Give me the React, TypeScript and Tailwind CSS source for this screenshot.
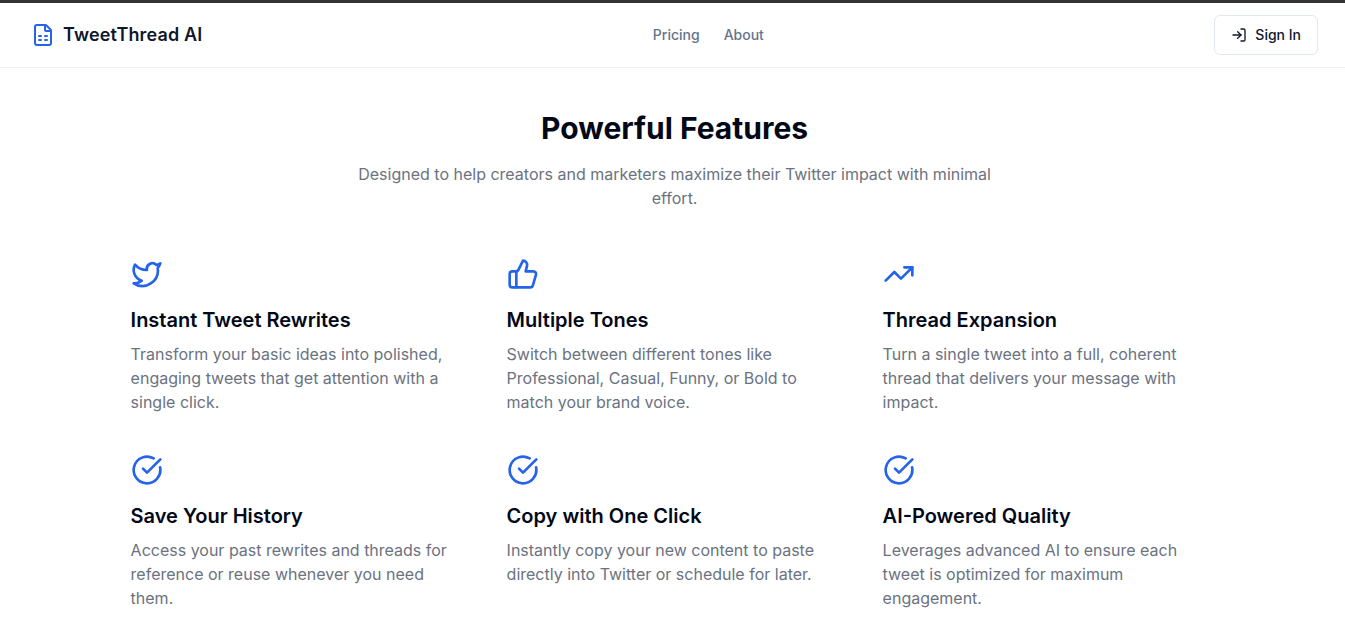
import { FileSpreadsheet, LogIn, Twitter, ThumbsUp, TrendingUp, CircleCheckBig } from "lucide-react";

const features = [
  { icon: Twitter, title: "Instant Tweet Rewrites", text: "Transform your basic ideas into polished, engaging tweets that get attention with a single click." },
  { icon: ThumbsUp, title: "Multiple Tones", text: "Switch between different tones like Professional, Casual, Funny, or Bold to match your brand voice." },
  { icon: TrendingUp, title: "Thread Expansion", text: "Turn a single tweet into a full, coherent thread that delivers your message with impact." },
  { icon: CircleCheckBig, title: "Save Your History", text: "Access your past rewrites and threads for reference or reuse whenever you need them." },
  { icon: CircleCheckBig, title: "Copy with One Click", text: "Instantly copy your new content to paste directly into Twitter or schedule for later." },
  { icon: CircleCheckBig, title: "AI-Powered Quality", text: "Leverages advanced AI to ensure each tweet is optimized for maximum engagement." },
];

export default function App() {
  return (
    <div className="h-[634px] overflow-hidden bg-white font-['Inter',sans-serif] border-t-[3px] border-[#333333]">
      <header className="flex h-[65px] items-center justify-between border-b border-[#f1f3f5] pl-[31px] pr-[27px]">
        <div className="flex items-center gap-2">
          <FileSpreadsheet className="h-6 w-6 text-[#2563eb]" />
          <span className="text-lg font-semibold tracking-[0.15px] text-[#0f172a]">TweetThread AI</span>
        </div>
        <nav className="flex gap-6 text-sm font-medium text-[#64748b]">
          <span>Pricing</span>
          <span>About</span>
        </nav>
        <button className="flex h-10 items-center gap-2 rounded-md border border-[#e2e8f0] bg-white px-4 text-sm font-medium text-[#0f172a]">
          <LogIn className="h-4 w-4" />
          Sign In
        </button>
      </header>
      <main className="ml-[130.6px] flex w-[1088px] flex-col items-center pt-[42px]">
        <h2 className="text-[30px] leading-9 font-bold text-[#020817]">Powerful Features</h2>
        <p className="mt-4 max-w-[672px] text-center text-base text-[#6b7280]">
          Designed to help creators and marketers maximize their Twitter impact with minimal effort.
        </p>
        <div className="mt-12 grid w-full grid-cols-[repeat(3,328px)] gap-x-12 gap-y-10">
          {features.map((f) => (
            <div key={f.title}>
              <f.icon className="h-8 w-8 text-[#2563eb]" strokeWidth={2} />
              <h3 className="mt-4 text-xl font-semibold text-[#020817]">{f.title}</h3>
              <p className="mt-2 text-base text-[#6b7280]">{f.text}</p>
            </div>
          ))}
        </div>
      </main>
    </div>
  );
}
